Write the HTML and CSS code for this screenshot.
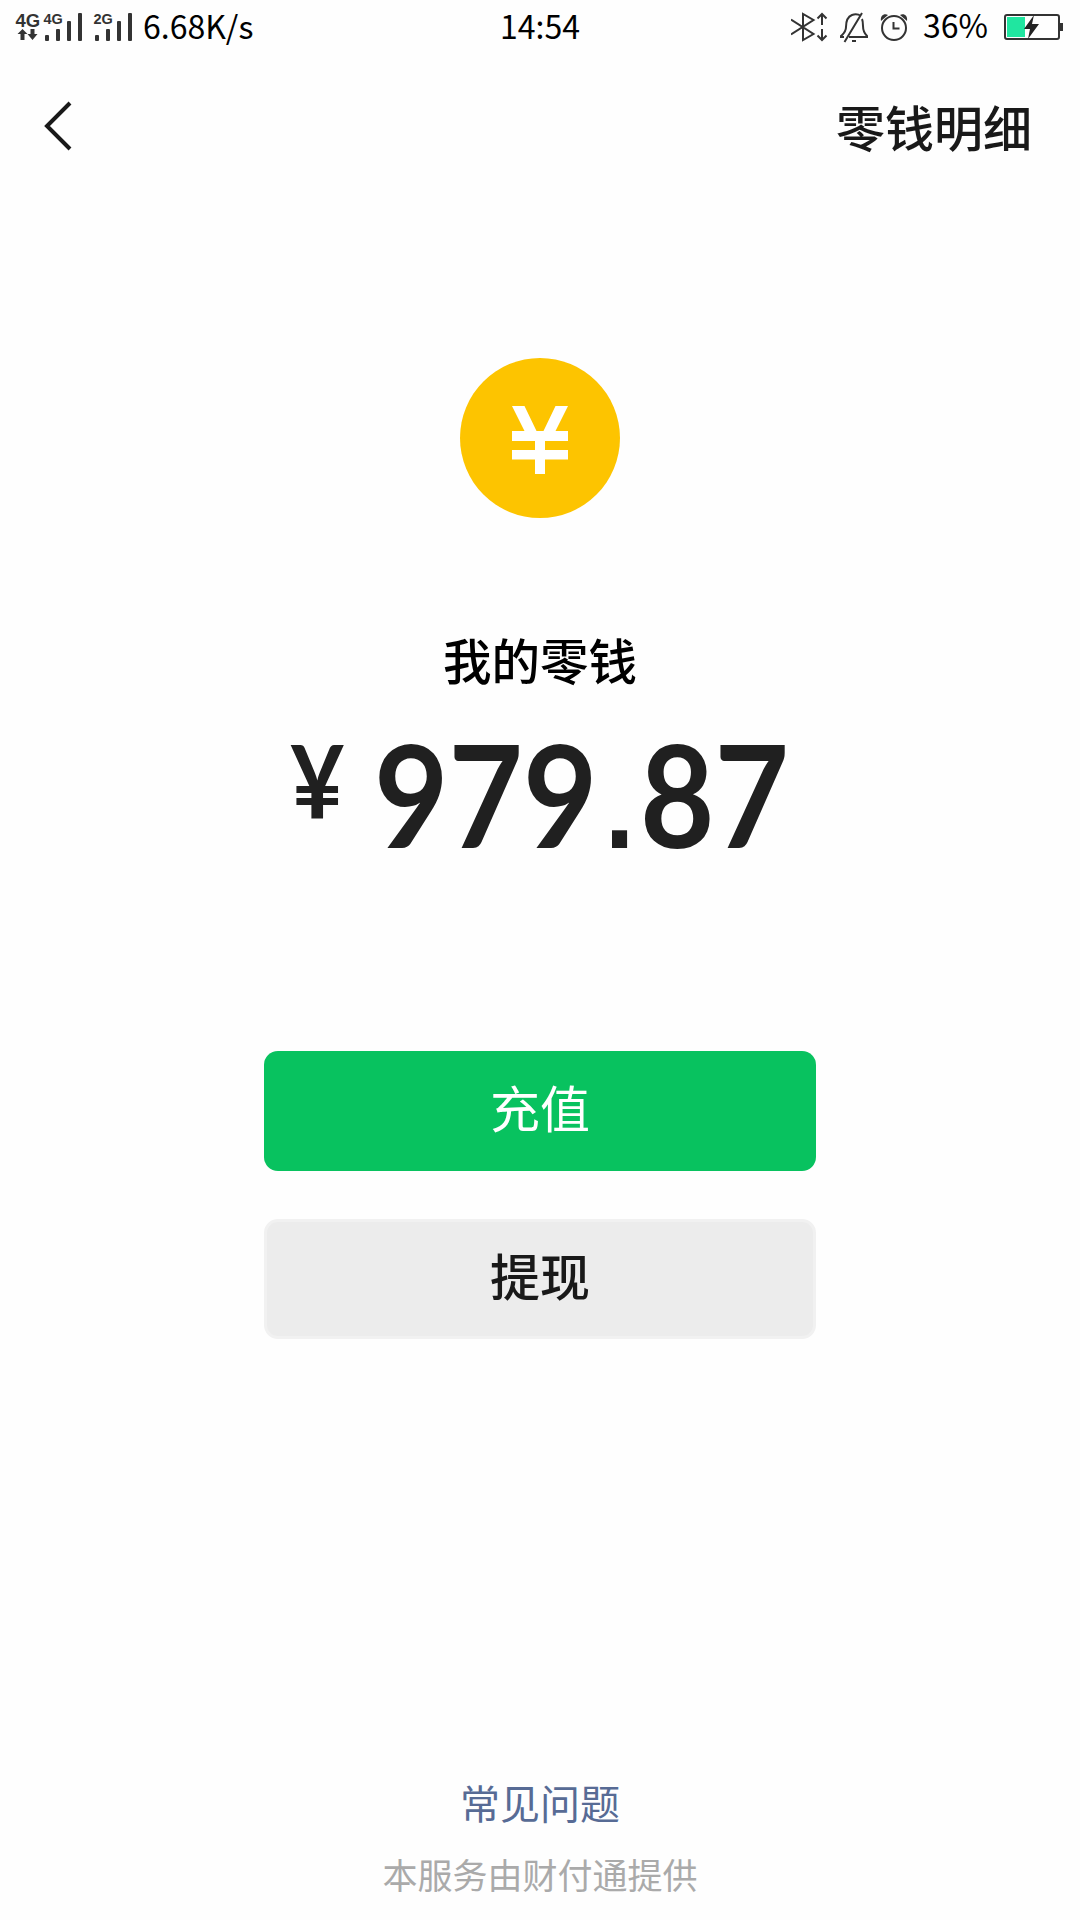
FILE: index.html
```html
<!DOCTYPE html>
<html lang="zh-CN">
<head>
<meta charset="utf-8">
<title>我的零钱</title>
<link rel="stylesheet" href="styles.css">
</head>
<body>
<div class="screen">
  <header class="status">
    <div class="status-left">
      <svg class="signals" width="120" height="56" viewBox="0 0 120 56" fill="#333">
        <g class="net">
          <text x="0.500" y="26.5" font-size="18.5">4G</text>
          <text x="28.500" y="23.5" font-size="14.5">4G</text>
          <text x="78.500" y="23.5" font-size="14.5">2G</text>
        </g>
        <path d="M2.500 34l5-5 5 5h-3v6h-4v-6zM12.500 34h3v-5h4v5h3l-5 6z"/>
        <rect x="30" y="35" width="4" height="6" rx="1"/><rect x="41" y="29" width="4" height="12" rx="1"/><rect x="52" y="21" width="4" height="20" rx="1"/><rect x="63" y="13" width="4" height="28" rx="1"/>
        <rect x="80" y="35" width="4" height="6" rx="1"/><rect x="91" y="29" width="4" height="12" rx="1"/><rect x="102" y="21" width="4" height="20" rx="1"/><rect x="113" y="13" width="4" height="28" rx="1"/>
      </svg>
      <span class="speed">6.68K/s</span>
    </div>
    <span class="time">14:54</span>
    <div class="status-right">
      <svg width="120" height="56" viewBox="791 0 120 56" fill="none" stroke="#333" stroke-width="2">
        <path d="M791 19.500L813.500 34 803 40V14L813.500 20 791 34.500M822 25V14M817.500 18.500L822 14l4.500 4.500M822 29v11M817.500 35.500L822 40l4.500-4.500"/>
        <path d="M861 16c-3-2-6-2-9-1-5 2-6 7-6 12 0 5-3 7-5 9v1h3M849 37h18v-1c-3-3-4-5-4-10 0-3 0-5-1-7M862 13L844.500 42M852 41h4"/>
        <circle cx="894" cy="28" r="12"/><path d="M893.500 22v6.500h6"/>
        <path d="M881 21c-1-5 3-8 7-6zM907 21c1-5-3-8-7-6z" fill="#333" stroke="none"/>
      </svg>
      <span class="percent">36%</span>
      <svg width="62" height="56" viewBox="1003 0 62 56">
        <rect x="1005" y="15" width="54" height="24" rx="2" fill="none" stroke="#333" stroke-width="2"/>
        <rect x="1007" y="17" width="18" height="20" fill="#20e6a0"/>
        <path d="M1060 23h3v8h-3z" fill="#333"/>
        <path d="M1034 15l-10 14h6l-2 10 11-15h-7z" fill="#222"/>
      </svg>
    </div>
  </header>
  <nav class="nav">
    <svg width="32" height="54" viewBox="0 0 32 54"><path d="M28 3L5 26 28 49" fill="none" stroke="#191919" stroke-width="4"/></svg>
    <span class="nav-link">零钱明细</span>
  </nav>
  <main class="main">
    <svg class="coin" width="160" height="160" viewBox="0 0 160 160">
      <circle cx="80" cy="80" r="80" fill="#fdc400"/>
      <path d="M52 48h12.500l12 25h7l12-25H108L95.500 73H108v10H85v9h23v9.500H85V116H75v-14.500H52V92h23v-9H52V73h12.500z" fill="#fff"/>
    </svg>
    <h1 class="title">我的零钱</h1>
    <div class="balance"><span class="currency">¥</span><span class="amount">979<span class="point">.</span>87</span></div>
    <button class="btn btn-primary">充值</button>
    <button class="btn btn-plain">提现</button>
  </main>
  <footer class="footer">
    <a class="faq">常见问题</a>
    <span class="provider">本服务由财付通提供</span>
  </footer>
</div>
</body>
</html>
```
FILE: styles.css
```css
* { box-sizing: border-box; }
body { margin: 0; background: #fff; font-family: "Noto Sans CJK SC", sans-serif; }
svg { display: block; flex: none; }
.screen { width: 1080px; height: 1920px; display: flex; flex-direction: column; background: #fefefe; }
.status { height: 56px; display: grid; grid-template-columns: 1fr auto 1fr; padding: 0 15px; font-size: 32px; line-height: 50px; color: #000; }
.status-left { display: flex; }
.signals { margin-right: 8px; }
.net { font-family: "Liberation Sans", sans-serif; font-weight: 700; }
.status-right { display: flex; justify-content: flex-end; }
.percent { margin: -1px 15px 0 12px; }
.nav { height: 142px; display: flex; justify-content: space-between; align-items: center; padding: 0 48px 0 42px; }
.nav-link { font-size: 49px; line-height: 60px; padding-bottom: 3px; font-weight: 500; color: #191919; }
.main { display: flex; flex-direction: column; align-items: center; }
.coin { margin-top: 160px; }
.title { margin: 106px 0 0; font-size: 48.500px; line-height: 70px; font-weight: 500; color: #000; }
.balance { width: 500px; height: 160px; margin-top: 19px; display: flex; color: #202020; font-family: Lato, sans-serif; font-weight: 700; }
.currency { flex: none; width: 84px; font-size: 101px; line-height: 132px; transform: scaleX(.93); transform-origin: left; }
.amount { flex: none; font-size: 142px; line-height: 160px; transform: scaleX(.905); transform-origin: left; }
.point { margin: 0 6px 0 8px; font-family: "Liberation Sans", sans-serif; font-size: 118px; line-height: 1; }
.btn { width: 552px; height: 120px; border: 0; border-radius: 14px; font-family: inherit; font-size: 50px; line-height: 70px; padding: 0 0 10px; }
.btn-primary { margin-top: 178px; background: #08c25f; color: #fff; }
.btn-plain { margin-top: 48px; background: #ececec; color: #191919; border: 3px solid #f1f1f1; font-weight: 500; }
.footer { margin-top: auto; padding-bottom: 20px; display: flex; flex-direction: column; align-items: center; }
.faq { font-size: 40px; line-height: 60px; color: #576b95; }
.provider { margin-top: 16px; font-size: 35px; line-height: 52px; color: #aaa; }
```
